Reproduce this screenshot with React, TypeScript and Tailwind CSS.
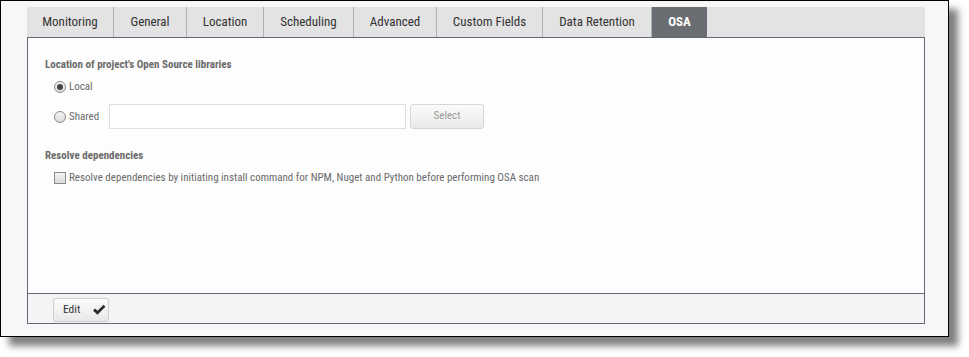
import React from "react";

const font = { fontFamily: "'Roboto Condensed','Liberation Sans Narrow','Arial Narrow',Roboto,'Liberation Sans',sans-serif" };

const tabs = [
  { label: "Monitoring", w: 87 },
  { label: "General", w: 73 },
  { label: "Location", w: 77 },
  { label: "Scheduling", w: 90 },
  { label: "Advanced", w: 83 },
  { label: "Custom Fields", w: 106 },
  { label: "Data Retention", w: 109 },
];

function Radio({ checked }: { checked?: boolean }) {
  return (
    <span className="flex h-[12px] w-[12px] items-center justify-center rounded-full border border-[#8a8a8a] bg-gradient-to-b from-[#f4f4f4] to-[#dcdcdc]">
      {checked && <span className="h-[6px] w-[6px] rounded-full bg-[#444]" />}
    </span>
  );
}

export default function App() {
  return (
    <div className="h-[357px] w-[969px] bg-white" style={font}>
      <div className="h-[337px] w-[949px] border border-black bg-[#f7f7f7] pl-[26px] pt-[6px] shadow-[9px_9px_7px_rgba(0,0,0,0.5)]">
        <div className="w-[898px]">
          {/* Tab bar */}
          <div className="flex h-[30px] bg-[#e3e3e3] text-[13px] text-[#333]">
            {tabs.map((t) => (
              <div
                key={t.label}
                className="flex items-center justify-center border-r border-[#aab2ba]"
                style={{ width: t.w }}
              >
                {t.label}
              </div>
            ))}
            <div className="flex w-[55px] items-center justify-center bg-[#6a6d72] font-bold text-white">
              OSA
            </div>
          </div>
          {/* Panel */}
          <div className="border border-[#666778]">
            <div className="h-[255px] bg-[#fdfdfd] pl-[17px] pt-[20px] text-[11px] text-[#6a6a6a]">
              <div className="font-bold leading-[14px]">Location of project's Open Source libraries</div>
              <div className="mt-[8px] flex items-center pl-[9px] leading-[14px]">
                <Radio checked />
                <span className="ml-[3px]">Local</span>
              </div>
              <div className="mt-[10px] flex items-center pl-[9px]">
                <Radio />
                <span className="ml-[3px] mt-[1px] w-[40px]">Shared</span>
                <div className="h-[25px] w-[297px] border border-[#e0e0e0] bg-white" />
                <button className="ml-[4px] h-[25px] w-[74px] rounded-[3px] border border-[#d6d6d6] bg-gradient-to-b from-[#fbfbfb] to-[#e9e9e9] text-[#9a9a9a]">
                  Select
                </button>
              </div>
              <div className="mt-[20px] font-bold leading-[14px]">Resolve dependencies</div>
              <div className="mt-[8px] flex items-center pl-[9px] leading-[14px]">
                <span className="h-[12px] w-[12px] border border-[#8a8a8a] bg-gradient-to-b from-[#f4f4f4] to-[#dcdcdc]" />
                <span className="ml-[3px]">
                  Resolve dependencies by initiating install command for NPM, Nuget and Python before performing OSA scan
                </span>
              </div>
            </div>
            <div className="flex h-[30px] items-center border-t border-[#666778] bg-[#f4f4f4] pl-[25px]">
              <button className="mt-[2px] flex h-[24px] w-[56px] items-center rounded-[3px] border border-[#cfcfcf] bg-gradient-to-b from-[#fcfcfc] to-[#e8e8e8] pl-[9px] text-[11.5px] text-[#333]">
                <span>Edit</span>
                <svg className="ml-[12px]" width="14" height="12" viewBox="0 0 14 12">
                  <path d="M1 6.5 L3.2 4.4 L5.5 6.8 L11.6 0.8 L13.4 2.8 L5.5 10.8 Z" fill="#2e2e2e" />
                </svg>
              </button>
            </div>
          </div>
        </div>
      </div>
    </div>
  );
}
